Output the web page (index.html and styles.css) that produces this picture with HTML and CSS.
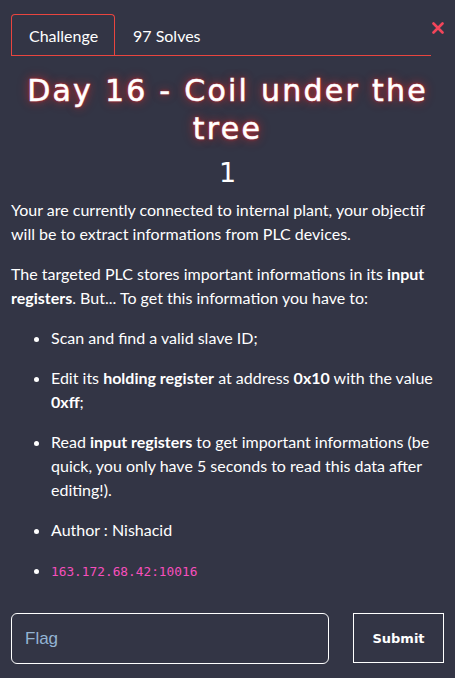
FILE: index.html
```html
<!DOCTYPE html>
<html>
<head>
<meta charset="utf-8">
<link rel="stylesheet" href="styles.css">
</head>
<body>
<div class="modal">
  <div class="top">
    <nav class="tabs">
      <span class="tab active">Challenge</span>
      <span class="tab">97 Solves</span>
    </nav>
    <span class="close"><svg width="12" height="12" viewBox="0 0 12 12"><path d="M1.5 1.5L10.5 10.5M10.5 1.5L1.5 10.5" stroke="#f2455a" stroke-width="2.6" stroke-linecap="round"/></svg></span>
  </div>
  <h1 class="title">Day 16 - Coil under the tree</h1>
  <div class="value">1</div>
  <div class="desc">
    <p>Your are currently connected to internal plant, your objectif will be to extract informations from PLC devices.</p>
    <p>The targeted PLC stores important informations in its <strong>input registers</strong>. But... To get this information you have to:</p>
    <ul>
      <li><p>Scan and find a valid slave ID;</p></li>
      <li><p>Edit its <strong>holding register</strong> at address <strong>0x10</strong> with the value <strong>0xff</strong>;</p></li>
      <li><p>Read <strong>input registers</strong> to get important informations (be quick, you only have 5 seconds to read this data after editing!).</p></li>
      <li><p>Author : Nishacid</p></li>
      <li><p><code>163.172.68.42:10016</code></p></li>
    </ul>
  </div>
  <form class="submit-row">
    <input class="flag" type="text" placeholder="Flag">
    <button class="btn" type="button">Submit</button>
  </form>
</div>
</body>
</html>
```
FILE: styles.css
```css
html, body {
  margin: 0;
  padding: 0;
  background: #333545;
}
body {
  font-family: Lato, "Open Sans", sans-serif;
  color: #ffffff;
  font-size: 16px;
}
.modal {
  width: 433px;
  padding: 14px 0 0 11px;
}
.top {
  display: flex;
  align-items: flex-start;
}
.tabs {
  display: flex;
  width: 420px;
  height: 41px;
  border-bottom: 1px solid #e9453f;
}
.tab {
  display: flex;
  align-items: center;
  padding: 0 16px 0 17px;
  font-size: 16px;
  border: 1px solid transparent;
  border-bottom: none;
  box-sizing: border-box;
  height: 41px;
}
.tab.active {
  border-color: #e9453f;
  border-radius: 4px 4px 0 0;
  width: 104px;
}
.close {
  margin: 8px 0 0 1px;
  display: flex;
}
.title {
  margin: 16px 0 0;
  text-align: center;
  font-family: "DejaVu Sans", sans-serif;
  font-weight: 500;
  font-size: 30px;
  letter-spacing: 2.25px;
  line-height: 38px;
  -webkit-text-stroke: 0.5px #ffffff;
  text-shadow: 0 0 3px rgba(255, 40, 40, 0.85), 0 0 8px rgba(255, 40, 40, 0.6), 0 0 14px rgba(255, 40, 40, 0.3);
}
.value {
  text-align: center;
  font-family: "DejaVu Sans", sans-serif;
  font-size: 27px;
  line-height: 34px;
  margin-top: 8px;
}
.desc {
  margin-top: 8px;
}
.desc p {
  margin: 0 0 16px;
  line-height: 24px;
}
.desc strong {
  font-weight: 700;
}
.desc ul {
  margin: 0;
  padding-left: 40px;
}
code {
  font-family: "DejaVu Sans Mono", monospace;
  font-size: 12.8px;
  color: #f74fbd;
}
.submit-row {
  display: flex;
  gap: 24px;
  margin-top: 29px;
}
.flag {
  width: 318px;
  height: 51px;
  box-sizing: border-box;
  background: transparent;
  border: 1px solid #ffffff;
  border-radius: 6px;
  padding: 0 13px;
  font-family: "Liberation Sans", Arial, sans-serif;
  font-size: 17px;
  color: #fff;
}
.flag::placeholder {
  color: #93b4d4;
}
.btn {
  width: 91px;
  height: 50px;
  background: transparent;
  border: 1px solid #ffffff;
  border-radius: 0;
  color: #fff;
  font-family: "DejaVu Sans", sans-serif;
  font-weight: 700;
  font-size: 13px;
  padding: 0;
}
```
